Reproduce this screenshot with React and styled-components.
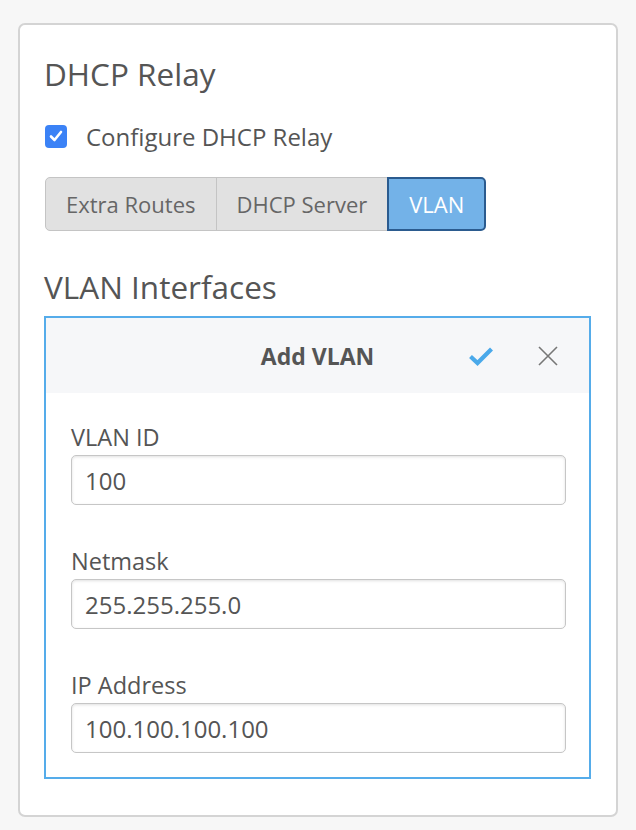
import React from "react";
import styled, { createGlobalStyle } from "styled-components";

const Global = createGlobalStyle`
  html, body { margin: 0; padding: 0; background: #f7f7f7; }
  body { font-family: "Open Sans", "Noto Sans", sans-serif; color: #555; }
  * { box-sizing: border-box; }
`;

const Page = styled.div`
  padding: 23px 18px 14px 18px;
`;

const Card = styled.section`
  background: #fff;
  border: 2px solid #d4d4d4;
  border-radius: 7px;
  padding: 32px 25px 36px 24px;
`;

const Title = styled.h2`
  margin: 0;
  font-size: 31.5px;
  line-height: 34px;
  font-weight: 400;
  color: #555;
`;

const CheckRow = styled.label`
  display: flex;
  align-items: center;
  gap: 19px;
  height: 30px;
  margin-top: 30px;
  font-size: 24px;
  color: #555;
`;

const CheckBox = styled.span`
  width: 22px;
  height: 23px;
  margin-left: 1px;
  border-radius: 4px;
  background: #3b82f6;
  display: flex;
  align-items: center;
  justify-content: center;
`;

const Tabs = styled.div`
  display: inline-flex;
  margin-top: 26px;
  height: 54px;
  margin-left: 1px;
`;

const Tab = styled.button`
  font-family: inherit;
  font-size: 22px;
  height: 54px;
  padding: 0 20px;
  margin-left: ${(p) => (p.$first ? "0" : "-1px")};
  border: ${(p) => (p.$active ? "2px solid #2b5b8f" : "1.5px solid #c4c4c4")};
  background: ${(p) => (p.$active ? "#73b2e8" : "#e1e1e1")};
  color: ${(p) => (p.$active ? "#fff" : "#666")};
  border-radius: ${(p) =>
    p.$first ? "5px 0 0 5px" : p.$last ? "0 5px 5px 0" : "0"};
  position: relative;
  z-index: ${(p) => (p.$active ? 1 : 0)};
`;

const SubTitle = styled.h3`
  margin: 39px 0 0 0;
  font-size: 31.5px;
  line-height: 34px;
  font-weight: 400;
  color: #555;
`;

const Editor = styled.div`
  margin-top: 12px;
  border: 2px solid #55acea;
`;

const EditorHeader = styled.div`
  height: 75px;
  background: #f6f7f9;
  display: grid;
  grid-template-columns: 1fr auto 1fr;
  align-items: center;
  padding: 0 31px;
`;

const EditorTitle = styled.div`
  grid-column: 2;
  font-size: 23px;
  font-weight: 700;
  color: #555;
`;

const Actions = styled.div`
  grid-column: 3;
  justify-self: end;
  display: flex;
  align-items: center;
  gap: 44px;
`;

const IconBtn = styled.span`
  display: flex;
  align-items: center;
  justify-content: center;
`;

const EditorBody = styled.div`
  padding: 30px 23px 24px 25px;
  display: flex;
  flex-direction: column;
  gap: 42px;
`;

const Field = styled.div`
  display: flex;
  flex-direction: column;
  gap: 4px;
`;

const Label = styled.label`
  font-size: 23.5px;
  line-height: 28px;
  color: #555;
`;

const Input = styled.input`
  font-family: inherit;
  font-size: 24px;
  color: #555;
  height: 50px;
  border: 1.5px solid #c6c6c6;
  border-radius: 5px;
  padding: 0 13px;
  box-shadow: inset 0 1px 3px rgba(0, 0, 0, 0.12);
  background: #fff;
  outline: none;
  width: 100%;
`;

const tabs = ["Extra Routes", "DHCP Server", "VLAN"];
const fields = [
  ["VLAN ID", "100"],
  ["Netmask", "255.255.255.0"],
  ["IP Address", "100.100.100.100"],
];

export default function App() {
  return (
    <Page>
      <Global />
      <Card>
        <Title>DHCP Relay</Title>
        <CheckRow>
          <CheckBox>
            <svg width="14" height="12" viewBox="0 0 14 12">
              <path d="M2 6.5 L5.5 10 L12 2" fill="none" stroke="#fff" strokeWidth="2.6" strokeLinecap="round" strokeLinejoin="round" />
            </svg>
          </CheckBox>
          Configure DHCP Relay
        </CheckRow>
        <Tabs>
          {tabs.map((t, i) => (
            <Tab key={t} $first={i === 0} $last={i === tabs.length - 1} $active={t === "VLAN"}>
              {t}
            </Tab>
          ))}
        </Tabs>
        <SubTitle>VLAN Interfaces</SubTitle>
        <Editor>
          <EditorHeader>
            <EditorTitle>Add VLAN</EditorTitle>
            <Actions>
              <IconBtn>
                <svg width="26" height="20" viewBox="0 0 26 20">
                  <path d="M2.5 10.5 L9.5 17 L23.5 3" fill="none" stroke="#4aa9ea" strokeWidth="4.2" strokeLinejoin="miter" />
                </svg>
              </IconBtn>
              <IconBtn>
                <svg width="20" height="20" viewBox="0 0 20 20">
                  <path d="M1 1 L19 19 M19 1 L1 19" fill="none" stroke="#777" strokeWidth="1.6" />
                </svg>
              </IconBtn>
            </Actions>
          </EditorHeader>
          <EditorBody>
            {fields.map(([l, v]) => (
              <Field key={l}>
                <Label>{l}</Label>
                <Input defaultValue={v} />
              </Field>
            ))}
          </EditorBody>
        </Editor>
      </Card>
    </Page>
  );
}
